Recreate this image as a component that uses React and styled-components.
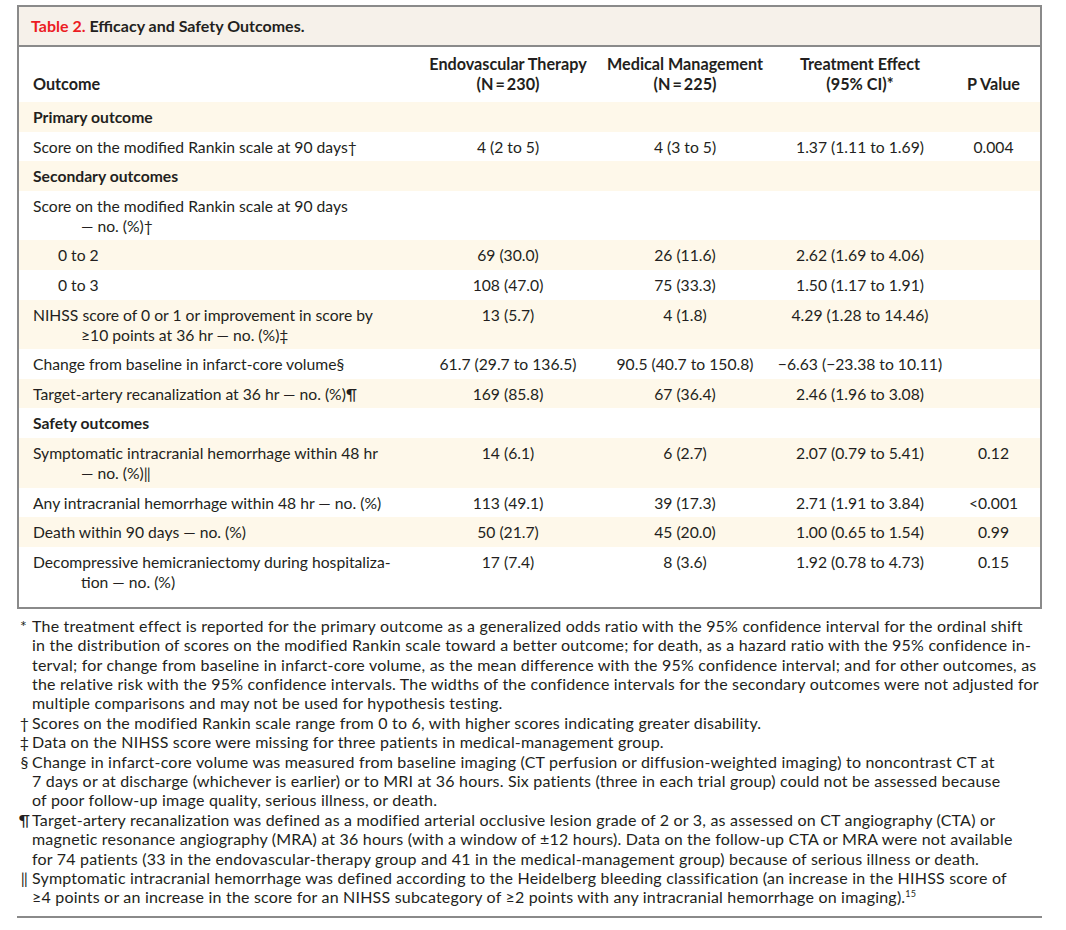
import React from 'react';
import styled, { createGlobalStyle } from 'styled-components';

const Global = createGlobalStyle`
    body {
        margin: 0;
        background: #fff;
        font-family: Lato, "Open Sans", sans-serif;
        color: #231f20;
    }
`

const Page = styled.div`
    width: 1025px;
    padding: 5px 0 0 17px;
`

const Table = styled.table`
    width: 100%;
    border-collapse: collapse;
    border: 2px solid #8a8a8a;
    font-size: 15.7px;
    line-height: 20px;
    table-layout: fixed;
`

const TitleCell = styled.th`
    background: #f6f1ea;
    border-bottom: 2px solid #8a8a8a;
    text-align: left;
    font-weight: 700;
    font-size: 16px;
    padding: 9px 12px 9px 12px;
    height: 20px;
    span {
        color: #ec1c24;
    }
`

const HeadCell = styled.th`
    font-weight: 700;
    font-size: 16.2px;
    text-align: ${p => (p.$left ? 'left' : 'center')};
    vertical-align: bottom;
    padding: ${p => (p.$left ? '0 0 8px 14px' : '0 0 8px 0')};
    height: 47px;
    white-space: nowrap;
`

const Row = styled.tr`
    background: ${p => (p.$shade ? '#fef8ea' : '#fff')};
`

const Outcome = styled.td`
    padding: 5px 0 ${p => (p.$last ? '15px' : '4.6px')} ${p => (p.$indent ? '39px' : '14px')};
    font-weight: ${p => (p.$section ? 700 : 400)};
    vertical-align: top;
    white-space: nowrap;
`

const Cont = styled.span`
    display: block;
    padding-left: 48px;
`

const Value = styled.td`
    text-align: center;
    vertical-align: top;
    padding: 5px 0 4.6px;
    white-space: nowrap;
`

const Notes = styled.div`
    margin-top: 7px;
    padding-bottom: 9px;
    border-bottom: 2px solid #8a8a8a;
    font-size: 16px;
    letter-spacing: 0.2px;
    line-height: 19.4px;
`

const Note = styled.div`
    display: flex;
    white-space: nowrap;
`

const Mark = styled.span`
    width: 15px;
    flex: none;
    text-align: ${p => (p.$left ? 'left' : 'center')};
    padding-left: ${p => (p.$left ? '3px' : '0')};
    box-sizing: border-box;
`

const Sup = styled.sup`
    font-size: 9px;
    line-height: 0;
`

const cols = ['Endovascular Therapy|(N\u2009=\u2009230)', 'Medical Management|(N\u2009=\u2009225)', 'Treatment Effect|(95% CI)*', 'P Value']

const rows = [
    { section: 'Primary outcome', shade: true },
    { label: ['Score on the modified Rankin scale at 90 days\u2020'], v: ['4 (2 to 5)', '4 (3 to 5)', '1.37 (1.11 to 1.69)', '0.004'] },
    { section: 'Secondary outcomes', shade: true },
    { label: ['Score on the modified Rankin scale at 90 days', '\u2014 no. (%)\u2020'], v: ['', '', '', ''] },
    { label: ['0 to 2'], indent: true, shade: true, v: ['69 (30.0)', '26 (11.6)', '2.62 (1.69 to 4.06)', ''] },
    { label: ['0 to 3'], indent: true, v: ['108 (47.0)', '75 (33.3)', '1.50 (1.17 to 1.91)', ''] },
    { label: ['NIHSS score of 0 or 1 or improvement in score by', '\u226510 points at 36 hr \u2014 no. (%)\u2021'], shade: true, v: ['13 (5.7)', '4 (1.8)', '4.29 (1.28 to 14.46)', ''] },
    { label: ['Change from baseline in infarct-core volume\u00a7'], v: ['61.7 (29.7 to 136.5)', '90.5 (40.7 to 150.8)', '\u22126.63 (\u221223.38 to 10.11)', ''] },
    { label: ['Target-artery recanalization at 36 hr \u2014 no. (%)\u00b6'], shade: true, v: ['169 (85.8)', '67 (36.4)', '2.46 (1.96 to 3.08)', ''] },
    { section: 'Safety outcomes' },
    { label: ['Symptomatic intracranial hemorrhage within 48 hr', '\u2014 no. (%)\u2016'], shade: true, v: ['14 (6.1)', '6 (2.7)', '2.07 (0.79 to 5.41)', '0.12'] },
    { label: ['Any intracranial hemorrhage within 48 hr \u2014 no. (%)'], v: ['113 (49.1)', '39 (17.3)', '2.71 (1.91 to 3.84)', '<0.001'] },
    { label: ['Death within 90 days \u2014 no. (%)'], shade: true, v: ['50 (21.7)', '45 (20.0)', '1.00 (0.65 to 1.54)', '0.99'] },
    { label: ['Decompressive hemicraniectomy during hospitaliza-', 'tion \u2014 no. (%)'], v: ['17 (7.4)', '8 (3.6)', '1.92 (0.78 to 4.73)', '0.15'], last: true },
]

const notes = [
    ['*', [
        'The treatment effect is reported for the primary outcome as a generalized odds ratio with the 95% confidence interval for the ordinal shift',
        'in the distribution of scores on the modified Rankin scale toward a better outcome; for death, as a hazard ratio with the 95% confidence in-',
        'terval; for change from baseline in infarct-core volume, as the mean difference with the 95% confidence interval; and for other outcomes, as',
        'the relative risk with the 95% confidence intervals. The widths of the confidence intervals for the secondary outcomes were not adjusted for',
        'multiple comparisons and may not be used for hypothesis testing.',
    ]],
    ['\u2020', ['Scores on the modified Rankin scale range from 0 to 6, with higher scores indicating greater disability.']],
    ['\u2021', ['Data on the NIHSS score were missing for three patients in medical-management group.']],
    ['\u00a7', [
        'Change in infarct-core volume was measured from baseline imaging (CT perfusion or diffusion-weighted imaging) to noncontrast CT at',
        '7 days or at discharge (whichever is earlier) or to MRI at 36 hours. Six patients (three in each trial group) could not be assessed because',
        'of poor follow-up image quality, serious illness, or death.',
    ]],
    ['\u00b6', [
        'Target-artery recanalization was defined as a modified arterial occlusive lesion grade of 2 or 3, as assessed on CT angiography (CTA) or',
        'magnetic resonance angiography (MRA) at 36 hours (with a window of \u00b112 hours). Data on the follow-up CTA or MRA were not available',
        'for 74 patients (33 in the endovascular-therapy group and 41 in the medical-management group) because of serious illness or death.',
    ]],
    ['\u2016', [
        'Symptomatic intracranial hemorrhage was defined according to the Heidelberg bleeding classification (an increase in the HIHSS score of',
        '\u22654 points or an increase in the score for an NIHSS subcategory of \u22652 points with any intracranial hemorrhage on imaging).',
    ], true],
]

const App = () => {
    return (
        <Page>
            <Global />
            <Table>
                <colgroup>
                    <col style={{ width: '401px' }} />
                    <col style={{ width: '178px' }} />
                    <col style={{ width: '176px' }} />
                    <col style={{ width: '174px' }} />
                    <col />
                </colgroup>
                <thead>
                    <tr>
                        <TitleCell colSpan={5}><span>Table 2.</span> Efficacy and Safety Outcomes.</TitleCell>
                    </tr>
                    <tr>
                        <HeadCell $left>Outcome</HeadCell>
                        {cols.map(c => (
                            <HeadCell key={c}>
                                {c.split('|').map((l, i) => <div key={i}>{l}</div>)}
                            </HeadCell>
                        ))}
                    </tr>
                </thead>
                <tbody>
                    {rows.map((r, i) => r.section ? (
                        <Row key={i} $shade={r.shade}>
                            <Outcome $section colSpan={5}>{r.section}</Outcome>
                        </Row>
                    ) : (
                        <Row key={i} $shade={r.shade}>
                            <Outcome $indent={r.indent} $last={r.last}>
                                {r.label[0]}
                                {r.label[1] && <Cont>{r.label[1]}</Cont>}
                            </Outcome>
                            {r.v.map((v, j) => <Value key={j}>{v}</Value>)}
                        </Row>
                    ))}
                </tbody>
            </Table>
            <Notes>
                {notes.map(([m, lines, ref]) => (
                    <Note key={m}>
                        <Mark $left={m === '*'}>{m}</Mark>
                        <div>
                            {lines.map((l, i) => (
                                <div key={i}>{l}{ref && i === lines.length - 1 && <Sup>15</Sup>}</div>
                            ))}
                        </div>
                    </Note>
                ))}
            </Notes>
        </Page>
    )
}

export default App
